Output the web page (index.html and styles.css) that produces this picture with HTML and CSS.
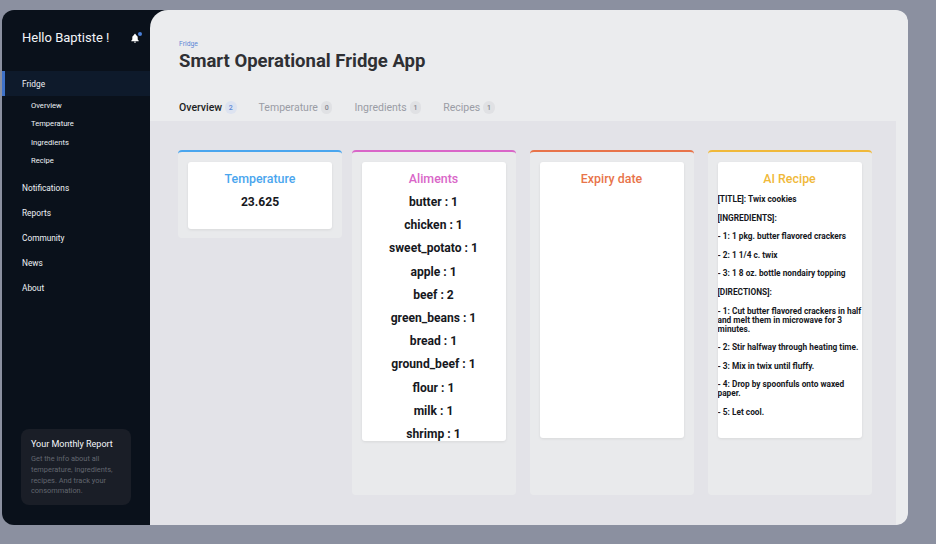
FILE: index.html
```html
<!DOCTYPE html>
<html lang="en">
<head>
<meta charset="utf-8">
<title>Smart Operational Fridge App</title>
<link rel="stylesheet" href="styles.css">
</head>
<body>
<div class="app">
  <aside class="sidebar">
    <div class="brand">
      <span class="hello">Hello Baptiste !</span>
      <span class="bell">
        <svg width="10" height="10" viewBox="0 0 24 24"><path fill="#fff" d="M12 2a2 2 0 0 0-2 2v.6C7 5.500 5.500 8 5.500 11v4.500L3 18.500V20h18v-1.500l-2.500-3V11c0-3-1.500-5.500-4.500-6.400V4a2 2 0 0 0-2-2zM9.500 21a2.500 2.500 0 0 0 5 0z"/></svg>
        <i class="bell-dot"></i>
      </span>
    </div>
    <nav class="nav">
      <a class="nav-item active">Fridge</a>
      <div class="subnav">
        <a>Overview</a>
        <a>Temperature</a>
        <a>Ingredients</a>
        <a>Recipe</a>
      </div>
      <a class="nav-item">Notifications</a>
      <a class="nav-item">Reports</a>
      <a class="nav-item">Community</a>
      <a class="nav-item">News</a>
      <a class="nav-item">About</a>
    </nav>
    <div class="report">
      <h3>Your Monthly Report</h3>
      <p>Get the info about all temperature, ingredients, recipes. And track your consommation.</p>
    </div>
  </aside>
  <main class="main">
    <header class="header">
      <div class="crumb">Fridge</div>
      <h1>Smart Operational Fridge App</h1>
      <div class="tabs">
        <div class="tab current">Overview <b class="badge">2</b></div>
        <div class="tab">Temperature <b class="badge">0</b></div>
        <div class="tab">Ingredients <b class="badge">1</b></div>
        <div class="tab">Recipes <b class="badge">1</b></div>
      </div>
    </header>
    <section class="content">
      <div class="col col-temp">
        <div class="card card-temp">
          <h2>Temperature</h2>
          <p class="value">23.625</p>
        </div>
      </div>
      <div class="col col-tall col-aliments">
        <div class="card card-aliments">
          <h2>Aliments</h2>
          <p class="value">butter : 1</p>
          <p class="value">chicken : 1</p>
          <p class="value">sweet_potato : 1</p>
          <p class="value">apple : 1</p>
          <p class="value">beef : 2</p>
          <p class="value">green_beans : 1</p>
          <p class="value">bread : 1</p>
          <p class="value">ground_beef : 1</p>
          <p class="value">flour : 1</p>
          <p class="value">milk : 1</p>
          <p class="value">shrimp : 1</p>
        </div>
      </div>
      <div class="col col-tall col-expiry">
        <div class="card card-std">
          <h2>Expiry date</h2>
        </div>
      </div>
      <div class="col col-tall col-recipe">
        <div class="card card-std">
          <h2>AI Recipe</h2>
          <div class="recipe">
            <p>[TITLE]: Twix cookies</p>
            <p>[INGREDIENTS]:</p>
            <p>- 1: 1 pkg. butter flavored crackers</p>
            <p>- 2: 1 1/4 c. twix</p>
            <p>- 3: 1 8 oz. bottle nondairy topping</p>
            <p>[DIRECTIONS]:</p>
            <p>- 1: Cut butter flavored crackers in half and melt them in microwave for 3 minutes.</p>
            <p>- 2: Stir halfway through heating time.</p>
            <p>- 3: Mix in twix until fluffy.</p>
            <p>- 4: Drop by spoonfuls onto waxed paper.</p>
            <p>- 5: Let cool.</p>
          </div>
        </div>
      </div>
    </section>
  </main>
</div>
</body>
</html>
```
FILE: styles.css
```css
* { box-sizing: border-box; }
html, body { margin: 0; padding: 0; height: 100%; overflow: hidden; }
body { background: #8b90a0; font-family: Roboto, "Liberation Sans", sans-serif; padding: 10px 0 0 2px; }
h1, h2, h3, p { margin: 0; }

.app {
  width: 906px; height: 515px; display: flex; overflow: hidden;
  border-radius: 12px;
  background: linear-gradient(90deg, #0a111b 168px, transparent 168px);
}

.sidebar { width: 148px; flex: none; display: flex; flex-direction: column; color: #f2f4f8; }
.brand { height: 61px; display: flex; align-items: flex-start; justify-content: space-between; padding: 20px 10px 0 20px; }
.hello { font-size: 13px; line-height: 16px; }
.bell { position: relative; display: block; width: 10px; height: 10px; margin-top: 3px; }
.bell svg { display: block; }
.bell-dot { position: absolute; top: -1px; right: -2px; width: 4px; height: 4px; border-radius: 50%; background: #4a80d8; }

.nav { display: flex; flex-direction: column; }
.nav-item { display: flex; align-items: center; height: 25px; padding-left: 20px; font-size: 8.3px; color: #eef1f6; }
.nav-item.active { background: #0e1a2b; border-left: 3px solid #3f72c9; padding-left: 17px; }
.subnav { display: flex; flex-direction: column; padding: 1px 0 5px 29px; }
.subnav a { height: 18.3px; line-height: 18.3px; font-size: 7.6px; color: #eef1f6; }

.report { margin: auto 19px 20px 19px; height: 76px; padding: 10px 10px 0; border-radius: 8px; background: #1a1e27; }
.report h3 { font-size: 9px; line-height: 11px; font-weight: 400; color: #f4f6fa; margin-bottom: 4px; }
.report p { font-size: 7.4px; line-height: 10.8px; color: #62666f; }

.main { flex: 1; display: flex; flex-direction: column; border-radius: 18px 10px 10px 0; background: #ebecee; overflow: hidden; }
.header { height: 111px; padding: 30px 0 0 29px; display: flex; flex-direction: column; }
.crumb { font-size: 6.8px; line-height: 9px; color: #5b87d6; }
.header h1 { font-size: 18.5px; line-height: 22px; font-weight: 700; color: #2f3034; margin-top: 1px; }
.tabs { display: flex; gap: 22px; margin-top: 20px; }
.tab { display: flex; align-items: center; gap: 3px; height: 37px; padding-bottom: 3px; font-size: 10.5px; color: #9a9ca5; border-bottom: 3px solid transparent; }
.tab.current { font-weight: 500; color: #1c1d22; border-bottom-color: #4a80d8; border-radius: 2px; }
.badge { display: inline-flex; align-items: center; justify-content: center; width: 11.5px; height: 13px; border-radius: 6px; background: #e0e1e4; font-size: 7px; font-weight: 500; color: #85878f; }
.current .badge { background: #dde3f0; color: #5b87d6; }

.content { flex: 1; margin-right: 12px; padding: 29px 0 0 28px; display: flex; align-items: flex-start; background: #e3e3e8; }
.col { width: 164px; flex: none; margin-right: 14px; padding: 10px 10px 9px; border-top: 2px solid; border-radius: 4px; background: #e9eaec; }
.col-temp { border-top-color: #4aa6ee; margin-right: 9.5px; }
.col-aliments { border-top-color: #d966c8; }
.col-expiry { border-top-color: #e8744a; }
.col-recipe { border-top-color: #f0b93a; margin-right: 0; }
.col-tall { height: 345px; }

.card { background: #fff; border-radius: 3px; box-shadow: 0 1px 3px rgba(0,0,0,.08); text-align: center; overflow: hidden; }
.card h2 { font-size: 12.4px; line-height: 15px; font-weight: 500; margin-top: 9px; margin-bottom: 9px; }
.col-temp h2 { color: #4aa6ee; }
.col-aliments h2 { color: #d966c8; }
.col-expiry h2 { color: #e8744a; }
.col-recipe h2 { color: #f0b93a; }
.card-temp { height: 67px; }
.card-aliments { height: 279px; }
.card-std { height: 276px; }
.value { font-size: 12.1px; line-height: 15px; font-weight: 700; color: #16181d; margin-bottom: 8.2px; }

.recipe { text-align: left; font-size: 8.3px; line-height: 9px; font-weight: 700; color: #16181d; }
.recipe p { margin-bottom: 9.6px; }
```
